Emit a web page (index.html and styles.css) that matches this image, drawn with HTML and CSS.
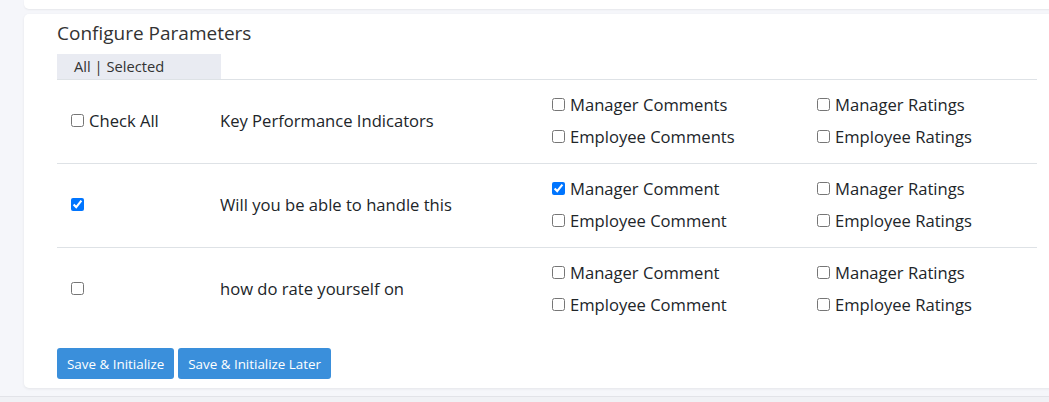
FILE: index.html
```html
<!DOCTYPE html>
<html>
<head>
<meta charset="utf-8">
<link rel="stylesheet" href="styles.css">
</head>
<body>
<div class="page">
  <div class="top-card"></div>
  <div class="card">
    <h2 class="title">Configure Parameters</h2>
    <div class="tabs"><span class="tab">All | Selected</span></div>
    <div class="table">
      <div class="row">
        <div class="cell c1"><label class="chk"><input type="checkbox"> Check All</label></div>
        <div class="cell c2">Key Performance Indicators</div>
        <div class="cell c3">
          <label class="opt"><input type="checkbox"> Manager Comments</label>
          <label class="opt"><input type="checkbox"> Employee Comments</label>
        </div>
        <div class="cell c4">
          <label class="opt"><input type="checkbox"> Manager Ratings</label>
          <label class="opt"><input type="checkbox"> Employee Ratings</label>
        </div>
      </div>
      <div class="row">
        <div class="cell c1"><label class="chk"><input type="checkbox" checked></label></div>
        <div class="cell c2">Will you be able to handle this</div>
        <div class="cell c3">
          <label class="opt"><input type="checkbox" checked> Manager Comment</label>
          <label class="opt"><input type="checkbox"> Employee Comment</label>
        </div>
        <div class="cell c4">
          <label class="opt"><input type="checkbox"> Manager Ratings</label>
          <label class="opt"><input type="checkbox"> Employee Ratings</label>
        </div>
      </div>
      <div class="row last">
        <div class="cell c1"><label class="chk"><input type="checkbox"></label></div>
        <div class="cell c2">how do rate yourself on</div>
        <div class="cell c3">
          <label class="opt"><input type="checkbox"> Manager Comment</label>
          <label class="opt"><input type="checkbox"> Employee Comment</label>
        </div>
        <div class="cell c4">
          <label class="opt"><input type="checkbox"> Manager Ratings</label>
          <label class="opt"><input type="checkbox"> Employee Ratings</label>
        </div>
      </div>
    </div>
    <div class="actions">
      <button class="btn">Save &amp; Initialize</button>
      <button class="btn">Save &amp; Initialize Later</button>
    </div>
  </div>
  <div class="footer-bar"></div>
</div>
</body>
</html>
```

FILE: styles.css
```css
html, body {
  margin: 0;
  padding: 0;
  background: #f5f6fa;
  overflow: hidden;
  font-family: "Open Sans", "Liberation Sans", sans-serif;
  color: #212529;
}

.page {
  padding-left: 24px;
  width: 1060px;
}

.top-card {
  height: 9px;
  background: #fff;
  border-radius: 0 0 5px 5px;
  box-shadow: 0 1px 2px rgba(0, 0, 0, 0.06);
  margin-bottom: 5px;
}

.card {
  background: #fff;
  border-radius: 5px;
  box-shadow: 0 1px 3px rgba(0, 0, 0, 0.07);
  padding: 8px 0 9px 33px;
  box-sizing: border-box;
  height: 374px;
}

.title {
  margin: 0;
  font-size: 19px;
  font-weight: 400;
  line-height: 22px;
  color: #333;
  height: 32px;
}

.tabs {
  display: flex;
}

.tab {
  display: block;
  width: 164px;
  height: 25px;
  box-sizing: border-box;
  padding-left: 17px;
  background: #e9ebf2;
  font-size: 14.7px;
  line-height: 25px;
  color: #333;
}

.table {
  width: 980px;
  border-top: 1px solid #dee2e6;
}

.row {
  display: grid;
  grid-template-columns: 163px 328px 265px 1fr;
  height: 83px;
  border-bottom: 1px solid #dee2e6;
}

.row.last {
  border-bottom: none;
}

.cell {
  display: flex;
  flex-direction: column;
  justify-content: center;
  font-size: 16.6px;
  padding-bottom: 2px;
  box-sizing: border-box;
}

.c1 {
  padding-left: 10px;
}

.c3, .c4 {
  justify-content: flex-start;
  padding-top: 8px;
  padding-bottom: 0;
}

.chk, .opt {
  display: flex;
  align-items: center;
  height: 32px;
  font-size: 16.6px;
  color: #212529;
}

.chk {
  height: 24px;
}

input[type="checkbox"] {
  width: 13px;
  height: 13px;
  margin: 0 5px 0 4px;
}

.actions {
  display: flex;
  gap: 4px;
  margin-top: 17px;
}

.btn {
  height: 31px;
  padding: 0 10px;
  border: none;
  border-radius: 3px;
  background: #3a8fdb;
  color: #fff;
  font-family: "Open Sans", "Liberation Sans", sans-serif;
  font-size: 13.4px;
  cursor: pointer;
}

.footer-bar {
  margin-top: 8px;
  margin-left: -24px;
  height: 10px;
  border-top: 1px solid #e2e3e8;
  background: #f0f1f5;
}
```
